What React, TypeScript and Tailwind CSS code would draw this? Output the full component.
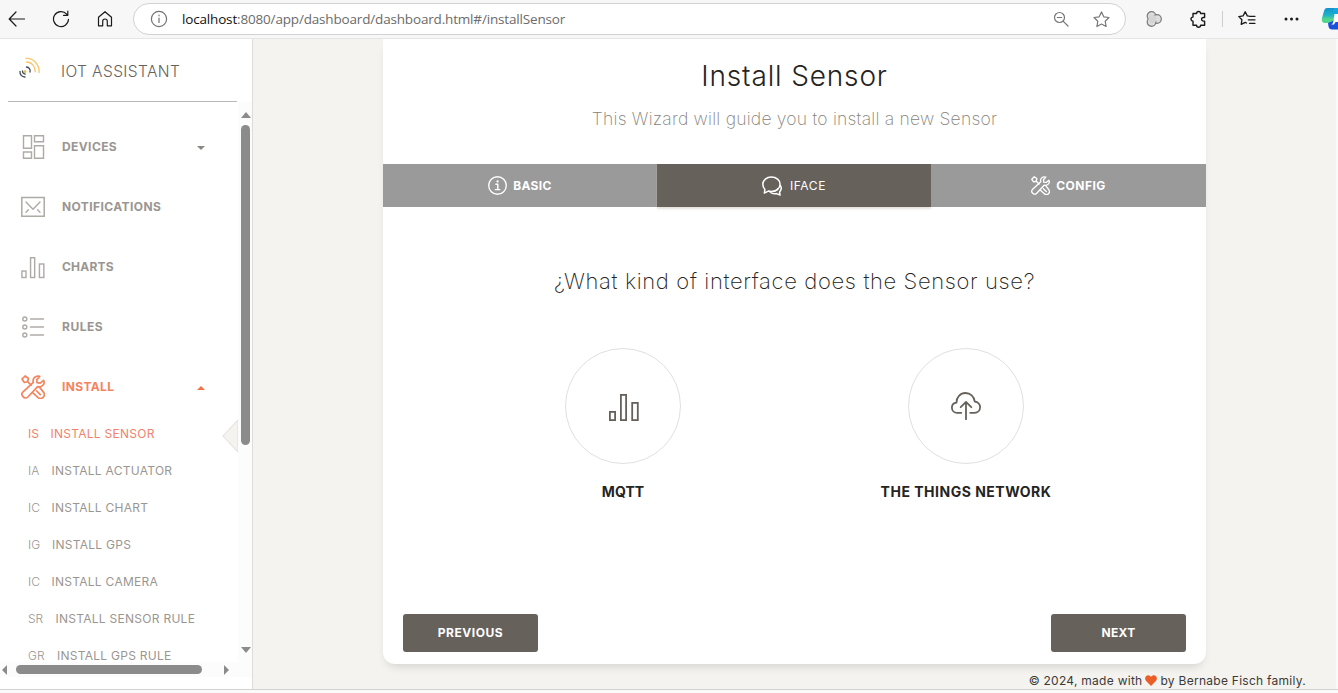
import type { ReactNode } from "react";

type IconProps = { className?: string };

function Svg({ className, box = "0 0 24 24", children }: { className?: string; box?: string; children: ReactNode }) {
  return (
    <svg className={className} viewBox={box} fill="none" stroke="currentColor" strokeWidth="1.2" strokeLinecap="round" strokeLinejoin="round">
      {children}
    </svg>
  );
}

function ToolsIcon({ className }: IconProps) {
  return (
    <Svg className={className}>
      <g strokeWidth="1.7">
        <path d="M4.1 1 L1 4.1 L3.2 7.3 L5.6 7 L7 5.6 L7.3 3.2 Z M6.3 6.3 L10.2 10.2" />
        <path d="M22.6 5.4 L19.2 8.1 L16 7.7 L15.8 4.8 L18.7 1.4 C14.6 0 11.2 3.4 12.3 7.4 L1.8 17.2 C-.9 20 3.8 25.2 6.9 22 L16.6 11.7 C21 12.6 24.4 9.1 22.6 5.4 Z" />
        <path d="M18.3 11.9 L22.4 17.1 C25.3 21 20.4 25.3 17.1 22.6 L11.6 17.6 M15.6 16 L19.3 19.7" />
      </g>
    </Svg>
  );
}

function BarsIcon({ className }: IconProps) {
  return (
    <Svg className={className} box="0 0 30 28">
      <g strokeWidth="1.8" strokeLinejoin="miter">
        <rect x=".9" y="17.9" width="5.2" height="8.2" />
        <rect x="11.9" y=".9" width="5.2" height="25.2" />
        <rect x="23.2" y="8.9" width="5.6" height="17.2" />
      </g>
    </Svg>
  );
}

function DevicesIcon({ className }: IconProps) {
  return (
    <Svg className={className}>
      <g strokeWidth="1.4" strokeLinejoin="miter">
        <path d="M2.500 .8h8v12.400h-8zM13.500 .8h9v6h-9zM2.500 17h8v6.200h-8zM13.500 10.800h9v12.400h-9z" />
      </g>
    </Svg>
  );
}

function MailIcon({ className }: IconProps) {
  return (
    <Svg className={className}>
      <path d="M.8 2.6h22.4v18.6H.8z" strokeWidth="1.5" strokeLinejoin="miter" />
      <path d="M5 7l7 7.200L19 7M5 17.200l2.400-2.400M19 17.200l-2.400-2.400" strokeWidth="1.400" />
    </Svg>
  );
}

function ListIcon({ className }: IconProps) {
  return (
    <Svg className={className}>
      <circle cx="3.800" cy="4" r="2" strokeWidth="1.400" />
      <circle cx="3.800" cy="12" r="2" strokeWidth="1.400" />
      <circle cx="3.800" cy="20" r="2" strokeWidth="1.400" />
      <path d="M9.500 4h13M9.500 12h13M9.500 20h13" strokeWidth="1.4" />
    </Svg>
  );
}

function InfoIcon({ className }: IconProps) {
  return (
    <Svg className={className}>
      <circle cx="12" cy="12" r="11.1" strokeWidth="1.7" />
      <path d="M10 10.5h2.4v6.7M9.3 17.2h5.6" strokeWidth="1.8" />
      <circle cx="12.1" cy="6.8" r="1.4" fill="currentColor" stroke="none" />
    </Svg>
  );
}

function ChatIcon({ className }: IconProps) {
  return (
    <Svg className={className}>
      <g strokeWidth="1.8">
        <path d="M11.300 1.200C5.500 1.200 1 5 1 10c0 2.500 1 4.600 2.500 6.200L2.800 20.500l4.700-2.400c1.100.3 2.500.5 3.800.5 5.900 0 10.400-3.700 10.400-8.700s-4.500-8.700-10.400-8.700z" />
        <path d="M22 11.300c1.600 2.600 1 5.900-1 7.900l.7 3.600-4.300-1.700c-3.300.7-6.400.1-8.200-2.300M19.500 15c-1.800 2.500-4 3.500-6.500 3.700" />
      </g>
    </Svg>
  );
}

function CloudIcon({ className }: IconProps) {
  return (
    <Svg className={className} box="0 0 30 28">
      <g strokeWidth="1.8">
        <path d="M10.300 20.800H6.200C3.200 20.800.9 18.600.9 15.700c0-2.700 2-4.800 4.600-5.100C5.300 5.200 9.300 1 14.500 1c4.800 0 8.700 3.600 9.200 8.500 3.100.4 5.400 2.900 5.400 5.800 0 3.100-2.400 5.500-5.500 5.500h-4.400" />
        <path d="M15 27.300V10M9.700 15.200L15 9.900l5.300 5.300" />
      </g>
    </Svg>
  );
}

function LogoIcon({ className }: IconProps) {
  return (
    <Svg className={className} box="0 0 22 22">
      <g strokeWidth="1.3">
        <path d="M7 1.500C14 .8 20.800 7.500 20 15.500M7.500 5C12.500 5 16.500 9.500 16.200 14.800" stroke="#f6c56e" />
        <path d="M7.500 10c2.500.3 4.200 2.400 3.500 5M1 14.500c-.3 3 1.800 5.600 5 5.500M3.500 14c0 1.700 1 2.900 2.700 3.100" stroke="#3f4d55" />
        <circle cx="6" cy="14.700" r="1.400" fill="#f6b94e" stroke="none" />
      </g>
    </Svg>
  );
}

function BrowserBar() {
  return (
    <header className="flex h-[39px] shrink-0 items-center border-b border-[#e5e5e5] bg-[#f7f7f7] text-[#1b1b1b]">
      <Svg className="ml-2 size-[18px]" box="0 0 18 18">
        <path d="M16.500 9H1.300M8 2L1.200 9 8 16" />
      </Svg>
      <Svg className="ml-[26px] size-[18px]" box="0 0 18 18">
        <path d="M16.500 9.300A7.500 7.500 0 1 1 14.700 4.200M15.800 1v4.300h-4.300" />
      </Svg>
      <Svg className="ml-[26px] size-[18px]" box="0 0 18 18">
        <path d="M2.500 7.300L9 1.700l6.500 5.600v8.500h-4.200v-4.500a2.300 2.300 0 0 0-4.600 0v4.500H2.500z" />
      </Svg>
      <div className="ml-[19px] flex h-8 w-[993px] items-center rounded-full border border-[#d2d2d2] bg-white">
        <Svg className="ml-4 size-[18px] text-[#727272]" box="0 0 18 18">
          <circle cx="9" cy="9" r="7.600" />
          <path d="M9 8v4.500M9 5.200v.6" />
        </Svg>
        <span className="ml-[14px] w-[871px] font-['Open_Sans',sans-serif] text-[13.500px] tracking-[-0.17px] whitespace-nowrap text-[#6b6b6b]">
          <span className="text-[#111]">localhost</span>:8080/app/dashboard/dashboard.html#/installSensor
        </span>
        <Svg className="size-4 text-[#777]" box="0 0 16 16">
          <circle cx="6.500" cy="6.500" r="5" />
          <path d="M10.300 10.300L15 15M4.300 6.500h4.400" />
        </Svg>
        <Svg className="ml-6 size-[17px] text-[#777]" box="0 0 17 17">
          <path d="M8.500 1l2.300 4.800 5.200.7-3.800 3.700.9 5.300-4.600-2.500-4.600 2.500.9-5.300L1 6.500l5.200-.7z" />
        </Svg>
      </div>
      <Svg className="ml-5 size-4 text-[#7b7b7b]" box="0 0 16 16">
        <circle cx="5.500" cy="5" r="4.300" fill="#ddd" />
        <circle cx="11" cy="8" r="4.300" fill="#ddd" />
        <circle cx="5.500" cy="11" r="4.300" fill="#ddd" />
        <circle cx="6.500" cy="8" r="4" fill="#d4d4d4" stroke="none" />
      </Svg>
      <Svg className="ml-7 size-[18px]" box="0 0 18 18">
        <path d="M3 3.500h3.600a2 2 0 0 1 4 0h4v4h-1.200a1.800 1.800 0 0 0 0 3.600h1.200v4.200h-4a2 2 0 0 1-4 0H3v-4.200a2 2 0 0 1 0-4z" strokeWidth="1.400" />
      </Svg>
      <div className="ml-[14px] h-4 w-px bg-[#cfcfcf]" />
      <Svg className="ml-[15px] size-[18px]" box="0 0 18 18">
        <path d="M11 6.200L9.300 5.900 7.200 1.700 5.100 5.900.8 6.600l3.100 3.200-.7 4.600 4-2.100 1.300.7M11.500 6.300H17M10.300 9.800H17M11.500 13.300H17" strokeWidth="1.300" />
      </Svg>
      <svg className="ml-[28px] h-1 w-[15px]" viewBox="0 0 15 4" fill="#1b1b1b">
        <circle cx="2" cy="2" r="1.500" />
        <circle cx="7.500" cy="2" r="1.500" />
        <circle cx="13" cy="2" r="1.500" />
      </svg>
      <svg className="-mt-px ml-[22px] h-[23px] w-[17px] shrink-0" viewBox="0 0 17 23">
        <defs>
          <linearGradient id="copilot" x1="0" y1="0" x2="0" y2="1">
            <stop offset="0" stopColor="#1191d1" />
            <stop offset=".5" stopColor="#20b5c4" />
            <stop offset=".75" stopColor="#55d58b" />
          </linearGradient>
        </defs>
        <path d="M6 1h11v6l-4 9H4.500C1.500 16 .2 14 1 11L3 4C3.500 2 4.500 1 6 1z" fill="url(#copilot)" />
        <path d="M7 16l5-2 5-7v15.500H11c-2 0-3-1-3.500-3z" fill="#1c50d8" />
        <path d="M13.500 7H17v8h-2.500l-1.500 2.500H9.500c2 0 2.600-1.500 3-4z" fill="#fff" />
        <path d="M13 1h4v6h-5z" fill="#16a5dd" />
      </svg>
    </header>
  );
}

const menu = [
  { label: "DEVICES", icon: <DevicesIcon className="size-6" />, track: "tracking-[0.4px]", caret: true },
  { label: "NOTIFICATIONS", icon: <MailIcon className="size-6" />, track: "tracking-[0.42px]" },
  { label: "CHARTS", icon: <BarsIcon className="mt-0.5 h-[22px] w-6" />, track: "tracking-[0.2px]" },
  { label: "RULES", icon: <ListIcon className="size-6" />, track: "tracking-[0.5px]" },
];

const subItems = [
  ["IS", "INSTALL SENSOR", "w-[22.500px]"],
  ["IA", "INSTALL ACTUATOR", "w-[23.500px]"],
  ["IC", "INSTALL CHART", "w-[23.500px]"],
  ["IG", "INSTALL GPS", "w-[24px]"],
  ["IC", "INSTALL CAMERA", "w-[23.500px]"],
  ["SR", "INSTALL SENSOR RULE", "w-[27.500px]"],
  ["GR", "INSTALL GPS RULE", "w-[29px]"],
];

function Sidebar() {
  return (
    <aside className="flex w-[253px] shrink-0 flex-col border-r border-[#dddcd9] bg-white">
      <div className="mx-2 flex h-[63px] w-[229px] shrink-0 items-center border-b border-[#b9b8b6]">
        <LogoIcon className="mb-1 ml-[11px] size-[22px]" />
        <span className="ml-5 pt-[3px] text-[15.500px] font-light tracking-[0.4px] whitespace-nowrap text-[#66615b]">IOT ASSISTANT</span>
      </div>
      <div className="flex h-[560px] shrink-0">
        <nav className="relative w-[238px] overflow-hidden pt-[15px]">
          {menu.map((m) => (
            <div key={m.label} className="flex h-[60px] items-center pl-[21px] text-[#9a9691]">
              <span className="opacity-80">{m.icon}</span>
              <span className={`ml-[17px] w-[135px] text-xs font-bold whitespace-nowrap ${m.track}`}>{m.label}</span>
              {m.caret && <span className="mt-0.5 border-x-4 border-t-4 border-x-transparent border-t-[#8b8783]" />}
            </div>
          ))}
          <div className="flex h-[60px] items-center pl-[21px] text-[#f4845f]">
            <ToolsIcon className="size-6" />
            <span className="ml-[17px] w-[135px] text-xs font-bold tracking-[0.35px]">INSTALL</span>
            <span className="mt-0.5 border-x-4 border-b-4 border-x-transparent border-b-[#f0734a]" />
          </div>
          <div className="-mt-0.5">
            {subItems.map(([code, label, w], i) => (
              <div key={label} className={`flex h-[37px] items-center pl-7 text-xs whitespace-nowrap ${i === 0 ? "text-[#f0836b]" : "text-[#9a9691]"}`}>
                <span className={`${w} ${i === 0 ? "" : "font-light"}`}>{code}</span>
                <span className="tracking-[0.27px]">{label}</span>
              </div>
            ))}
          </div>
          <svg className="absolute top-[317px] right-0 h-[34px] w-4" viewBox="0 0 16 34">
            <path d="M16 1L.8 17 16 33z" fill="#f4f3ef" stroke="#dedddb" />
          </svg>
        </nav>
        <div className="flex w-[14px] flex-col items-center bg-[#fcfcfc] pt-[10px] pl-px">
          <span className="border-x-[5px] border-b-[6px] border-x-transparent border-b-[#8b8b8b]" />
          <span className="mt-[7px] h-[320px] w-[9px] rounded-full bg-[#8b8b8b]" />
          <span className="mt-[202px] border-x-[5px] border-t-[6px] border-x-transparent border-t-[#8b8b8b]" />
        </div>
      </div>
      <div className="flex h-[15px] shrink-0 items-center bg-[#fcfcfc] pl-0.5">
        <span className="border-y-[5px] border-r-[5px] border-y-transparent border-r-[#8b8b8b]" />
        <span className="ml-[9px] h-[9px] w-[186px] rounded-full bg-[#8b8b8b]" />
        <span className="ml-[22px] border-y-[5px] border-l-[5px] border-y-transparent border-l-[#8b8b8b]" />
      </div>
    </aside>
  );
}

function Choice({ icon, label, track }: { icon: ReactNode; label: string; track: string }) {
  return (
    <div className="flex w-[343px] flex-col items-center">
      <div className="flex size-[116px] items-center justify-center rounded-full border border-[#e0e0e0] text-[#66615b]">{icon}</div>
      <div className={`mt-[18px] text-[14px] leading-5 font-bold whitespace-nowrap text-[#252422] ${track}`}>{label}</div>
    </div>
  );
}

function Wizard() {
  return (
    <section className="ml-[130px] flex h-[625px] w-[823px] shrink-0 flex-col rounded-b-xl bg-white shadow-[0_6px_10px_-4px_rgba(0,0,0,0.15)]">
      <div className="flex h-[125px] flex-col items-center pt-[17px] whitespace-nowrap">
        <h1 className="text-[28px] leading-10 font-light tracking-[0.85px] text-[#252422]">Install Sensor</h1>
        <p className="mt-[9px] text-[17.500px] leading-7 font-extralight tracking-[0.22px] text-[#85817c]">This Wizard will guide you to install a new Sensor</p>
      </div>
      <div className="flex h-[43px] text-xs text-white">
        <div className="flex w-[274px] items-center justify-center bg-[#9a9a9a] font-bold">
          <InfoIcon className="mr-[6px] size-[19px]" />
          <span className="tracking-[0.35px]">BASIC</span>
        </div>
        <div className="flex w-[274px] items-center justify-center bg-[#66615b] shadow-[0_2px_2px_rgba(204,197,185,0.5)]">
          <ChatIcon className="mr-[8px] size-[20px]" />
          <span className="tracking-[0.6px]">IFACE</span>
        </div>
        <div className="flex w-[275px] items-center justify-center bg-[#9a9a9a] font-bold">
          <ToolsIcon className="mr-[6px] size-[19px]" />
          <span className="tracking-[0.5px]">CONFIG</span>
        </div>
      </div>
      <h2 className="mt-[58px] text-center text-[22px] leading-8 font-extralight tracking-[0.64px] whitespace-nowrap text-[#252422]">¿What kind of interface does the Sensor use?</h2>
      <div className="mt-[51px] flex justify-center">
        <Choice icon={<BarsIcon className="mt-1 ml-0.5 h-7 w-[30px]" />} label="MQTT" track="tracking-[0.05px]" />
        <Choice icon={<CloudIcon className="h-7 w-[30px]" />} label="THE THINGS NETWORK" track="tracking-[0.5px]" />
      </div>
      <div className="mt-auto mb-3 flex justify-between px-5">
        <button className="h-[38px] w-[135px] rounded-[3px] bg-[#66615b] text-xs font-bold tracking-[0.55px] text-white">PREVIOUS</button>
        <button className="h-[38px] w-[135px] rounded-[3px] bg-[#66615b] text-xs font-bold tracking-[0.3px] text-white">NEXT</button>
      </div>
    </section>
  );
}

export default function App() {
  return (
    <div className="flex h-[693px] w-[1338px] flex-col overflow-hidden bg-[#fafafa] font-[Inter,sans-serif]">
      <BrowserBar />
      <div className="flex h-[651px] border-b border-[#d2d2d1] bg-[#fafafa]">
        <Sidebar />
        <main className="flex w-[1083px] flex-col bg-[#f4f3ef]">
          <Wizard />
          <footer className="flex h-[30px] items-center justify-end pt-2 pr-[30px] text-xs tracking-[0.27px] whitespace-nowrap text-[#3c3a37]">
            <span>© 2024, made with</span>
            <svg className="mx-[3px] h-[11px] w-3" viewBox="0 0 12 11" fill="#eb5e28">
              <path d="M6 11L1.100 6C-1 3.500.5.3 3.200.3 4.500.3 5.500 1 6 2 6.500 1 7.500.3 8.800.3 11.500.3 13 3.500 10.900 6z" />
            </svg>
            <span>by Bernabe Fisch family.</span>
          </footer>
        </main>
      </div>
    </div>
  );
}
